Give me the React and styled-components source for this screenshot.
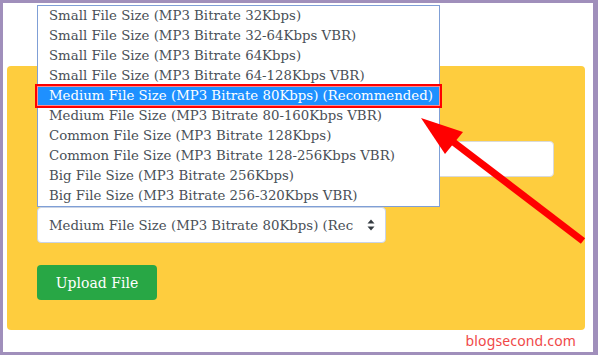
import React from "react";
import styled, { createGlobalStyle } from "styled-components";

const Global = createGlobalStyle`
  html, body { margin: 0; padding: 0; background: #ffffff; }
  * { box-sizing: border-box; }
`;

const SERIF = `"DejaVu Serif", "Liberation Serif", serif`;

const Frame = styled.div`
  position: relative;
  width: 598px;
  height: 355px;
  border: 3px solid #a08fbb;
  border-right-width: 5px;
  background: #ffffff;
  padding: 63px 4px 0 4px;
  display: flex;
  flex-direction: column;
  font-family: ${SERIF};
  overflow: hidden;
`;

const Panel = styled.div`
  width: 578px;
  height: 264px;
  background: #fecd3e;
  border-radius: 4px;
  padding: 75px 30px 30px 30px;
  display: flex;
  flex-direction: column;
  align-items: flex-start;
`;

const TextInput = styled.div`
  width: 517px;
  height: 36px;
  background: #ffffff;
  border: 1px solid #d9d9d9;
  border-radius: 4px;
`;

const Select = styled.div`
  margin-top: 30px;
  width: 349px;
  height: 36px;
  background: #ffffff;
  border: 1px solid #c9d3e6;
  border-radius: 4px;
  display: flex;
  align-items: center;
  padding: 0 10px 0 11px;
  color: #495057;
  font-size: 13.3px;
`;

const SelectText = styled.span`
  flex: 1;
  white-space: nowrap;
  overflow: hidden;
  text-overflow: clip;
  margin-right: 14px;
`;

const Button = styled.div`
  margin-top: 22px;
  width: 120px;
  height: 35px;
  background: #28a745;
  border-radius: 4px;
  color: #ffffff;
  font-size: 14px;
  display: flex;
  align-items: center;
  justify-content: center;
`;

const Watermark = styled.div`
  align-self: flex-end;
  margin: 3px 13px 0 0;
  color: #f04848;
  font-family: "Noto Sans", "Open Sans", sans-serif;
  font-size: 14px;
  line-height: 16px;
  letter-spacing: 0.15px;
`;

const List = styled.ul`
  position: absolute;
  left: 34px;
  top: 2px;
  width: 403px;
  margin: 0;
  padding: 0;
  list-style: none;
  background: #ffffff;
  border: 1px solid #7f9fd6;
  font-size: 13.3px;
  color: #495057;
`;

const Option = styled.li`
  position: relative;
  height: 20px;
  line-height: 20px;
  padding-left: 11px;
  white-space: nowrap;
  background: ${(p) => (p.$active ? "#1e90ff" : "transparent")};
  color: ${(p) => (p.$active ? "#ffffff" : "inherit")};
`;

const Callout = styled.span`
  position: absolute;
  left: -3px;
  right: -3px;
  top: -2px;
  bottom: -2px;
  border: 2px solid #ff0000;
  box-shadow: inset 0 0 0 1px #ff8a8a;
  pointer-events: none;
`;

const ArrowLayer = styled.svg`
  position: absolute;
  left: -3px;
  top: -3px;
  width: 598px;
  height: 355px;
  pointer-events: none;
`;

const options = [
  "Small File Size (MP3 Bitrate 32Kbps)",
  "Small File Size (MP3 Bitrate 32-64Kbps VBR)",
  "Small File Size (MP3 Bitrate 64Kbps)",
  "Small File Size (MP3 Bitrate 64-128Kbps VBR)",
  "Medium File Size (MP3 Bitrate 80Kbps) (Recommended)",
  "Medium File Size (MP3 Bitrate 80-160Kbps VBR)",
  "Common File Size (MP3 Bitrate 128Kbps)",
  "Common File Size (MP3 Bitrate 128-256Kbps VBR)",
  "Big File Size (MP3 Bitrate 256Kbps)",
  "Big File Size (MP3 Bitrate 256-320Kbps VBR)",
];

const Chevrons = () => (
  <svg width="8" height="12" viewBox="0 0 8 12">
    <path d="M4 0.5 L7.5 4.5 H0.5 Z" fill="#343a40" />
    <path d="M4 11.5 L7.5 7.5 H0.5 Z" fill="#343a40" />
  </svg>
);

export default function App() {
  return (
    <>
      <Global />
      <Frame>
        <Panel>
          <TextInput />
          <Select>
            <SelectText>Medium File Size (MP3 Bitrate 80Kbps) (Recommended)</SelectText>
            <Chevrons />
          </Select>
          <Button>Upload File</Button>
        </Panel>
        <Watermark>blogsecond.com</Watermark>
        <List>
          {options.map((o, i) => (
            <Option key={o} $active={i === 4}>
              {o}
              {i === 4 && <Callout />}
            </Option>
          ))}
        </List>
        <ArrowLayer viewBox="0 0 598 355">
          <line x1="452" y1="141" x2="583" y2="241" stroke="#ff0000" strokeWidth="7" />
          <polygon points="421,118 463,132 445,154" fill="#ff0000" />
        </ArrowLayer>
      </Frame>
    </>
  );
}
